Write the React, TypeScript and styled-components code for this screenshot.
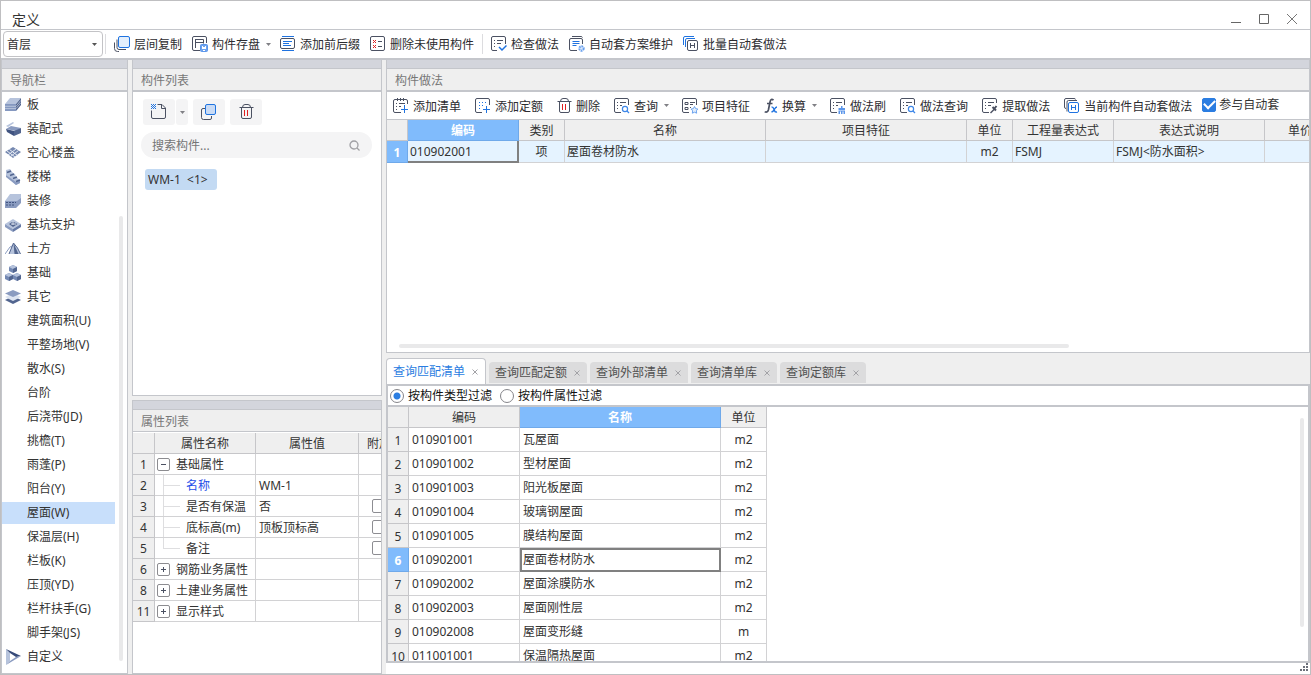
import React, { useState } from 'react';
import styled, { createGlobalStyle, css } from 'styled-components';

const c = {
  frame: '#bfbfc1',
  edge: '#c4c6cb',
  strip: '#d3d5dc',
  head: '#efefef',
  grid: '#d2d2d4',
  ink: '#333',
  line: '#4b5162',
  blue: '#2b7de1',
  sel: '#80bbfc',
};

const Global = createGlobalStyle`
  * { box-sizing: border-box; }
  body { margin: 0; background: #fff; }
  body, button, input, select, table {
    font-family: "Noto Sans", "Noto Sans CJK SC", sans-serif;
    font-size: 12px;
    line-height: 20px;
    color: ${c.ink};
  }
  button { border: 0; padding: 0; background: none; cursor: pointer; white-space: nowrap; }
`;

/* ---------- frame ---------- */

const Window = styled.div`
  display: flex;
  flex-direction: column;
  height: 100vh;
  border: 1px solid ${c.frame};
  background: #fff;
  overflow: hidden;
`;

const TitleBar = styled.header`
  display: flex;
  align-items: flex-end;
  justify-content: space-between;
  flex: none;
  height: 29px;
  padding: 0 12px 0 11px;
  border-bottom: 1px solid ${c.edge};
`;

const Title = styled.h1`
  margin: 0;
  font-size: 14px;
  font-weight: 400;
  line-height: 18px;
`;

const WindowButtons = styled.div`
  display: flex;
  gap: 16px;
  padding-bottom: 3px;
  button { display: flex; }
`;

const Body = styled.main`
  display: grid;
  grid-template-columns: 127px 250px minmax(0, 1fr);
  column-gap: 4px;
  flex: 1;
  min-height: 0;
  background: ${c.head};
`;

const Column = styled.div<{ $rows: string; $gap?: number }>`
  display: grid;
  grid-template-rows: ${p => p.$rows};
  grid-template-columns: minmax(0, 1fr);
  row-gap: ${p => p.$gap ?? 0}px;
  min-height: 0;
`;

const Panel = styled.section`
  display: flex;
  flex-direction: column;
  min-width: 0;
  min-height: 0;
  border: 1px solid ${c.edge};
  border-top: 0;
  background: #fff;
  overflow: hidden;
  position: relative;
`;

const Strip = styled.div<{ $top?: boolean }>`
  flex: none;
  height: ${p => (p.$top ? 10 : 9)}px;
  background: ${c.strip};
  border-top: ${p => (p.$top ? `1px solid ${c.edge}` : '0')};
  border-bottom: 1px solid ${c.edge};
`;

const PanelTitle = styled.h2<{ $line?: number }>`
  flex: none;
  margin: 0;
  padding: 1px 8px 0;
  height: ${p => 21 + (p.$line ?? 2)}px;
  border-bottom: ${p => p.$line ?? 2}px solid ${c.edge};
  background: ${c.head};
  color: #777;
  font-size: 12px;
  font-weight: 400;
  line-height: 21px;
`;

const ScrollThumb = styled.div<{ $vertical?: boolean; $from: string; $to: string; $edge: number }>`
  position: absolute;
  border-radius: 2px;
  background: #e9e9ea;
  ${p =>
    p.$vertical
      ? css`width: 4px; right: ${p.$edge}px; top: ${p.$from}; bottom: ${p.$to};`
      : css`height: 4px; bottom: ${p.$edge}px; left: ${p.$from}; right: ${p.$to};`}
`;

/* ---------- toolbars ---------- */

const MainToolbar = styled.div`
  display: flex;
  align-items: center;
  gap: 10px;
  flex: none;
  height: 30px;
  padding: 0 2px;
  border-bottom: 2px solid ${c.edge};
`;

const FloorPicker = styled.label`
  display: flex;
  align-items: center;
  width: 100px;
  height: 26px;
  padding: 0 5px 0 3px;
  border: 1px solid #c3c3c6;
  border-radius: 4px;
  select {
    flex: 1;
    appearance: none;
    border: 0;
    padding: 1px 0 0;
    background: none;
    outline: none;
  }
`;

const Divider = styled.span<{ $tight?: boolean }>`
  width: 1px;
  height: 20px;
  margin: 0 -2px 0 ${p => (p.$tight ? -8 : -2)}px;
  background: #dcdcdf;
`;

const PickerGroup = styled.div`
  display: flex;
  align-items: center;
  gap: 10px;
`;

const ToolButton = styled.button`
  display: flex;
  align-items: center;
  gap: 4px;
  color: #2c2c30;
  svg { flex: none; }
`;

const LowText = styled.span`
  padding-top: 2px;
`;

const ToolGroup = styled.div`
  display: flex;
  align-items: center;
  gap: 6px;
  margin-right: -1px;
`;

const CaretButton = styled.button`
  display: flex;
  align-items: center;
  height: 16px;
`;

const PracticeToolbar = styled.div`
  display: flex;
  align-items: center;
  gap: 14px;
  flex: none;
  height: 28px;
  padding: 0 6px;
  border-bottom: 1px solid ${c.edge};
`;

const AutoCheck = styled.label`
  display: flex;
  align-items: center;
  gap: 3px;
  margin-left: -4px;
  padding-bottom: 2px;
  white-space: nowrap;
`;

const TickBox = styled.input.attrs({ type: 'checkbox' })`
  appearance: none;
  flex: none;
  width: 14px;
  height: 14px;
  margin: 0;
  border: 1px solid #8d8d92;
  border-radius: 2px;
  background: #fff;
  &:checked {
    display: flex;
    align-items: center;
    justify-content: center;
    border-color: ${c.blue};
    background: ${c.blue};
  }
  &:checked::after {
    content: '';
    width: 9px;
    height: 5px;
    border: solid #fff;
    border-width: 0 0 2px 2px;
    transform: rotate(-45deg) translate(1px, -1px);
  }
`;

/* ---------- navigation ---------- */

const NavList = styled.ul`
  margin: 0;
  padding: 1px 0 0;
  list-style: none;
  flex: 1;
  overflow: hidden;
`;

const NavRow = styled.li`
  padding: 1px 12px 1px 0;
  height: 24px;
`;

const NavButton = styled.button<{ $active?: boolean; $child?: boolean }>`
  display: flex;
  align-items: center;
  gap: 6px;
  width: 100%;
  height: 22px;
  padding-left: ${p => (p.$child ? 25 : 3)}px;
  background: ${p => (p.$active ? '#c8dffb' : 'none')};
`;

/* ---------- component list ---------- */

const ListActions = styled.div`
  display: flex;
  gap: 5px;
  padding: 7px 10px;
  flex: none;
`;

const SplitButton = styled.div`
  display: flex;
  gap: 1px;
`;

const SoftButton = styled.button<{ $narrow?: boolean }>`
  display: flex;
  align-items: center;
  justify-content: center;
  width: ${p => (p.$narrow ? 12 : 32)}px;
  height: 26px;
  border-radius: 3px;
  background: #f4f4f5;
`;

const SearchField = styled.label`
  display: flex;
  align-items: center;
  flex: none;
  height: 26px;
  margin: 0 9px 0 8px;
  padding: 0 12px 0 11px;
  border-radius: 13px;
  background: #f4f4f5;
  input {
    flex: 1;
    min-width: 0;
    border: 0;
    padding: 2px 0 0;
    background: none;
    outline: none;
    &::placeholder { color: #757575; opacity: 1; }
  }
`;

const ComponentItem = styled.button`
  align-self: flex-start;
  min-width: 72px;
  height: 21px;
  margin: 11px 12px;
  padding: 0 3px;
  border-radius: 3px;
  background: #c3daf3;
  text-align: left;
  white-space: pre;
`;

/* ---------- tables ---------- */

const Grid = styled.table`
  table-layout: fixed;
  border-collapse: separate;
  border-spacing: 0;
  width: 0;
  flex: none;
  line-height: 18px;
`;

const cell = css`
  padding: 0;
  border: solid ${c.grid};
  border-width: 0 1px 1px 0;
  font-weight: 400;
  white-space: nowrap;
  overflow: hidden;
`;

const headLook = css<{ $selected?: boolean }>`
  ${cell}
  padding-top: 2px;
  border-color: ${p => (p.$selected ? '#6fa9ea' : '#c6c6c9')};
  background: ${p => (p.$selected ? c.sel : c.head)};
  color: ${p => (p.$selected ? '#fff' : c.ink)};
  font-weight: ${p => (p.$selected ? 700 : 400)};
`;

const HeadCell = styled.th<{ $selected?: boolean }>`
  ${headLook}
  height: 21px;
`;

const RowHead = styled.th<{ $selected?: boolean }>`
  ${headLook}
`;

const Cell = styled.td<{ $h: number; $center?: boolean; $focus?: 'box' | 'corner'; $tint?: boolean; $low?: boolean }>`
  ${cell}
  height: ${p => p.$h}px;
  padding-top: ${p => (p.$low ? 2 : 0)}px;
  padding-left: ${p => (p.$center ? 0 : p.$tint ? 2 : 3)}px;
  text-align: ${p => (p.$center ? 'center' : 'left')};
  background: ${p => (p.$tint ? '#e5f3ff' : '#fff')};
  ${p => p.$focus === 'box' && css`outline: 2px solid #808080; outline-offset: -2px;`}
  ${p => p.$focus === 'corner' && css`border-color: #808080; box-shadow: inset -1px -1px #808080;`}
  ${TickBox} { display: block; margin: 0 auto; }
`;

const TableArea = styled.div<{ $inset?: boolean }>`
  flex: 1;
  min-height: 0;
  padding-top: ${p => (p.$inset ? 1 : 0)}px;
  overflow: hidden;
`;

const NameCell = styled.div<{ $link?: boolean }>`
  display: flex;
  align-items: center;
  height: 20px;
  margin-left: -3px;
  color: ${p => (p.$link ? '#1f4fe8' : c.ink)};
`;

const Expander = styled.button`
  display: flex;
  align-items: center;
  justify-content: center;
  width: 13px;
  height: 13px;
  margin: 0 6px 0 2px;
  border: 1px solid #8c8c90;
  border-radius: 2px;
`;

/* ---------- lower query area ---------- */

const QueryArea = styled.div`
  display: flex;
  flex-direction: column;
  min-height: 0;
  padding-top: 5px;
`;

const Tabs = styled.div`
  display: flex;
  align-items: flex-end;
  gap: 3px;
  flex: none;
  height: 26px;
`;

const Tab = styled.div<{ $active?: boolean }>`
  display: flex;
  align-items: center;
  gap: 7px;
  height: ${p => (p.$active ? 26 : 21)}px;
  margin-bottom: ${p => (p.$active ? 0 : 1)}px;
  padding: 0 7px 0 6px;
  border: solid ${c.edge};
  border-width: ${p => (p.$active ? '1px 1px 0' : '0')};
  border-radius: 4px 4px 0 0;
  background: ${p => (p.$active ? '#fff' : '#dcdcdd')};
  button { display: flex; align-items: center; color: ${p => (p.$active ? c.blue : '#505050')}; }
`;

const QueryPanel = styled.section`
  position: relative;
  display: flex;
  flex-direction: column;
  flex: 1;
  min-height: 0;
  border: 2px solid ${c.edge};
  background: #fff;
  overflow: hidden;
`;

const FilterBar = styled.div`
  display: flex;
  align-items: center;
  gap: 8px;
  flex: none;
  height: 21px;
  padding-left: 2px;
  border-bottom: 2px solid ${c.edge};
  label { display: flex; align-items: center; gap: 4px; color: #111; }
`;

const Radio = styled.input.attrs({ type: 'radio' })`
  appearance: none;
  width: 14px;
  height: 14px;
  margin: 0;
  border: 1px solid #85858a;
  border-radius: 50%;
  background: #fff;
  &:checked { background: radial-gradient(circle, ${c.blue} 3px, #fff 4px); }
`;

const StatusBar = styled.footer`
  display: flex;
  justify-content: flex-end;
  align-items: flex-start;
  height: 11px;
  padding-right: 2px;
  background: #fff;
`;

/* ---------- icons ---------- */

const Svg = ({ w = 16, h = 16, children }: { w?: number; h?: number; children: React.ReactNode }) => (
  <svg width={w} height={h} viewBox={`0 0 ${w} ${h}`} fill="none" stroke={c.line} strokeWidth="1" aria-hidden="true">
    {children}
  </svg>
);

const Caret = ({ color = '#808085' }: { color?: string }) => (
  <svg width="5" height="3" viewBox="0 0 5 3" aria-hidden="true"><path d="M0 0h5L2.5 3z" fill={color} /></svg>
);

const sheet = 'M7 14.5H2Q.5 14.5.5 13V2Q.5.5 2 .5h11q1.500 0 1.500 1.500v5M3 4.500h1M6 4.500h6M3 7.500h1M6 7.500h2M3 10.500h1';

const icons: Record<string, React.ReactNode> = {
  floorCopy: (
    <Svg>
      <path d="M3 3.500v8q0 2 2 2h7M.5 6.500v6q0 3 3 3H5" />
      <rect x="4.500" y=".5" width="11" height="11" rx="1.500" fill="#e4effc" stroke="#1f73e0" />
    </Svg>
  ),
  store: (
    <Svg>
      <path d="M8 14.500H2Q.5 14.500.5 13V2Q.5.5 2 .5h11q1.500 0 1.500 1.500v5M3.500 3v9M3.500 3.500h8v4M3.500 6.500h8" />
      <rect x="8.500" y="8.500" width="7" height="7" rx="1" fill="#6ea3ee" stroke="#5c96ea" />
      <path d="M10 10h1v1h2v-1h1v3h-4zM11 14h2v1h-2z" fill="#fff" stroke="none" />
    </Svg>
  ),
  affix: (
    <Svg>
      <path d="M2 .5h12M2 14.500h12M3 5.500h9M3 7.500h6M3 9.500h8" stroke="#1f73e0" />
      <rect x=".5" y="2.500" width="14" height="10" rx="1.500" />
    </Svg>
  ),
  purge: (
    <Svg>
      <rect x=".5" y=".5" width="14" height="14" rx="1.500" />
      <path d="M3 4h1v1h1v-1h1v1h-1v1h1v1h-1v-1h-1v1h-1v-1h1v-1h-1zM3 9h1v1h1v-1h1v1h-1v1h1v1h-1v-1h-1v1h-1v-1h1v-1h-1z" fill="#e02020" stroke="none" />
      <path d="M8 5.500h4M8 10.500h4" />
    </Svg>
  ),
  check: (
    <Svg>
      <path d="M6 14.500H2Q.5 14.500.5 13V2Q.5.5 2 .5h11q1.500 0 1.500 1.500v6M3 4.500h1M6 4.500h6M3 7.500h1M6 7.500h4M3 10.500h1" />
      <path d="m8 11 3 3 4.500-4.500" stroke="#1f73e0" strokeWidth="1.500" />
    </Svg>
  ),
  scheme: (
    <Svg>
      <path d="M3 .5h9q1 0 1.500 1M8 14.500H2Q.5 14.500.5 13V4Q.5 2.500 2 2.500h10q1.500 0 1.500 1.500v4" />
      <path d="M3.500 5.500h7M3.500 7.500h7M3.500 9.500h4" stroke="#1f73e0" />
      <circle cx="12.500" cy="12.500" r="2.200" fill="#dce9fc" stroke="#6ba2ee" strokeWidth="2" strokeDasharray="1.600 .7" />
    </Svg>
  ),
  batch: (
    <Svg>
      <path d="M.5 9V2Q.5.5 2 .5h9M2.500 11V4Q2.500 2.500 4 2.500h8" stroke="#1f73e0" />
      <rect x="4.500" y="4.500" width="10" height="10" rx="1.500" />
      <path d="M7.500 7v5M11.500 7v5M7.500 9.500h4" />
    </Svg>
  ),
  addList: (
    <Svg>
      <path d="M4.500 0v3M7.500 0v3M10.500 0v3M8 14.500H2Q.5 14.500.5 13V3Q.5 1.500 2 1.500h11q1.500 0 1.500 1.500v3M3 5.500h1M6 5.500h6M3 8.500h1M6 8.500h2M3 11.500h1" />
      <path d="M11.500 7v8M8 11.500h7" stroke="#1f73e0" />
    </Svg>
  ),
  addQuota: (
    <Svg>
      <path d="M7 14.500H2Q.5 14.500.5 13V2Q.5.5 2 .5h11q1.500 0 1.500 1.500v5" />
      <path d="M4 4.500h8M4 7.500h6M4 10.500h3" strokeDasharray="1 2" stroke="#1f73e0" />
      <path d="M11.500 8v7M8 11.500h7" stroke="#1f73e0" />
    </Svg>
  ),
  trash: (
    <Svg w={15}>
      <path d="M.5 3.500h14M3.500 3.500q0-3 2.500-3h3q2.500 0 2.500 3M2.500 3.500V13q0 1.500 1.500 1.500h7q1.500 0 1.500-1.500V3.500" />
      <path d="M5.500 6v6M8.500 6v6" stroke="#e02020" />
    </Svg>
  ),
  query: (
    <Svg>
      <path d={sheet} />
      <circle cx="11" cy="11" r="2.600" stroke="#3e87e8" strokeWidth="1.200" /><path d="m13 13 2 2" stroke="#3e87e8" strokeWidth="1.200" />
    </Svg>
  ),
  feature: (
    <Svg>
      <path d="M7 14.500H2Q.5 14.500.5 13V2Q.5.5 2 .5h11q1.500 0 1.500 1.500v5M3 4.500h3v2H3zM3 9.500h3v2H3zM8 4.500h5M8 6.500h3M8 9.500h1" />
      <path d="m12.500 8.500 1.200 2.200 2.300.4-1.700 1.700.4 2.400-2.200-1-2.200 1 .4-2.400L9 11.100l2.300-.4z" stroke="#6ba2ee" fill="#e4effc" />
    </Svg>
  ),
  formula: (
    <Svg w={14}>
      <path d="M9.500 2.200Q7 0 6 4L4.500 11.500q-.8 3.500-3.800 2.300M3 5.500h5.500" strokeWidth="1.700" />
      <path d="M7.500 9.200q1.500-.5 2.200 1.500l1 2.300q.5 1.500 2.300.8M13 9q-1.500 0-2.500 2.200t-3 2.800" stroke="#1f73e0" strokeWidth="1.400" />
    </Svg>
  ),
  brush: (
    <Svg>
      <path d={sheet} />
      <path d="M11 8h1.500v2H15v2H8.500v-2H11zM8.500 12.500h6.500V16H8.500z" fill="#5c96ea" stroke="none" />
      <path d="M10.500 13.500V16M13 13.500V16" stroke="#fff" />
    </Svg>
  ),
  extract: (
    <Svg>
      <path d="M7 14.500H2Q.5 14.500.5 13V2Q.5.5 2 .5h11q1.500 0 1.500 1.500v3M3 4.500h1M6 4.500h6M3 7.500h1M6 7.500h3M3 10.500h1" />
      <path d="m8.500 15 4-4" strokeWidth="1.500" /><path d="m10.500 9 3.500 3.500M12.500 10.500 14.500 8" strokeWidth="2" />
    </Svg>
  ),
  current: (
    <Svg>
      <path d="M2 10.500Q.5 10.500.5 9V2Q.5.5 2 .5h8q1.500 0 1.500 1M3 13.500V4Q3 2.500 4.500 2.500H13" />
      <rect x="4.500" y="4.500" width="10" height="10" rx="1.500" stroke="#1f73e0" fill="#fff" />
      <path d="M7.500 7v5M11.500 7v5M7.500 9.500h4" stroke="#1f73e0" />
    </Svg>
  ),
  create: (
    <Svg>
      <path d="M6.500.5h4.500L14.500 4V13q0 1.500-1.500 1.500H2Q.5 14.500.5 13V6.500M10.500.5V4.500h4" />
      <path d="M0 .5h5M0 2.500h5M0 4.500h5M1 1.500h4M1 3.500h4" stroke="#1f73e0" strokeDasharray="1 1" />
    </Svg>
  ),
  duplicate: (
    <Svg>
      <path d="M4 4.500H2Q.5 4.500.5 6v7.500q0 2 2 2H9q1.500 0 1.500-1.500V12" />
      <rect x="4.500" y=".5" width="10" height="10" rx="1.500" fill="#c9dbf5" stroke="#1f73e0" />
    </Svg>
  ),
  search: <Svg w={11} h={11}><circle cx="5" cy="5" r="4" stroke="#a0a0a4" strokeWidth="1.300" /><path d="m8 8 2.500 2.500" stroke="#a0a0a4" strokeWidth="1.300" /></Svg>,
  close: <Svg w={6} h={6}><path d="m.5.5 5 5m0-5-5 5" stroke="#a2a2a6" /></Svg>,
};

const N = ({ children }: { children: React.ReactNode }) => (
  <svg width="16" height="16" viewBox="0 0 16 16" aria-hidden="true">{children}</svg>
);
const light = '#b6c3dc', mid = '#8a9bc0', dark = '#52658f';

const navIcons: Record<string, React.ReactNode> = {
  slab: <N><path d="M5 1h11l-5 6H0z" fill={light} /><path d="M0 7h11v7H0z" fill="#8598c0" /><path d="M11 7l5-6v7l-5 6z" fill={dark} /><path d="M0 9.300h11l5-6M0 11.600h11l5-6" stroke="#dbe2ef" strokeWidth=".6" fill="none" /></N>,
  prefab: <N><path d="M1 5l7-4 1 1-6 4z" fill={light} /><path d="M1 8l5-3 10 2-5 3z" fill={mid} /><path d="M1 8l8 2v5l-7-4z" fill="#405380" /><path d="M9 10l7-3v5l-7 3z" fill={dark} /></N>,
  hollow: <N><path d="M8 2l8 5-8 6-8-6z" fill="#7588b0" /><path d="M2 6l8 6M4.500 4.500l8 6M11 4l-8 6M13.500 5.500l-8 6" stroke="#e6ebf4" strokeWidth="1" /></N>,
  stair: <N><path d="M1 1l4-1 3 4 2 1 1 3 4 3v3l-4 2L1 6z" fill={light} /><path d="M1 6l10 7 4-2v3l-4 2L1 8z" fill={mid} /><path d="M2 3.500l4-1.500M5 6.500l4-1.500M8 9.500l4-1.500M11 12.500l4-1.500" stroke={dark} strokeWidth="1.600" /></N>,
  finish: <N><path d="M5 1h11v7H0z" fill={light} /><path d="M0 8h12l4-3v5l-5 5H0z" fill={mid} /><path d="M1 9.500h10M1 12h9" stroke="#405480" strokeDasharray="2 1" /></N>,
  pit: <N><path d="M0 7l8-5 8 5-8 5z" fill={light} /><path d="M0 7l8 5v3L0 10z" fill={mid} /><path d="M16 7l-8 5v3l8-5z" fill="#6579a5" /><path d="M4 7l4-2.500L12.500 7 8 10z" fill={dark} /><path d="M8 4v4M6 7h5" stroke="#d9e1ee" /></N>,
  earth: <N><path d="M0 13L5 6l2-1" stroke={mid} fill="none" /><path d="M4 13L8.500 2l4 5 3 6z" fill={light} /><path d="M8.500 2l1 11h4z" fill={dark} /><path d="M4 13L8.500 2l4 5 3 6" stroke={dark} fill="none" /></N>,
  base: <N><path d="M8 0l4 2v4L8 8 4 6V2zM4 8l4 2v4l-4 2-4-2v-4zM12 8l4 2v4l-4 2-4-2v-4z" fill="#7388b3" /><path d="M8 0l4 2-4 2-4-2zM4 8l4 2-4 2-4-2zM12 8l4 2-4 2-4-2z" fill={light} /><path d="M8 4l4-2v4L8 8zM4 12l4-2v4l-4 2zM12 12l4-2v4l-4 2z" fill={dark} /></N>,
  other: <N><path d="M0 11l8-4 8 4-8 4z" fill={dark} /><path d="M0 8l8-4 8 4-8 4z" fill="#dde4f1" /><path d="M0 4.500L8 1l8 3.500L8 8z" fill={mid} /></N>,
  custom: <N><path d="M1 0v16l4-4V4z" fill={light} /><path d="M1 0l15 7-5 1-6-4z" fill="#364a79" /><path d="M1 16l15-9-5 1-6 4z" fill={mid} /></N>,
};

/* ---------- data ---------- */

const navGroups: [string, string][] = [
  ['slab', '板'], ['prefab', '装配式'], ['hollow', '空心楼盖'], ['stair', '楼梯'], ['finish', '装修'],
  ['pit', '基坑支护'], ['earth', '土方'], ['base', '基础'], ['other', '其它'],
];
const navChildren = [
  '建筑面积(U)', '平整场地(V)', '散水(S)', '台阶', '后浇带(JD)', '挑檐(T)', '雨蓬(P)', '阳台(Y)',
  '屋面(W)', '保温层(H)', '栏板(K)', '压顶(YD)', '栏杆扶手(G)', '脚手架(JS)',
];

type Property = { no: number; name: string; value?: string; kind: 'open' | 'closed' | 'leaf'; last?: boolean; extra?: boolean };

const properties: Property[] = [
  { no: 1, name: '基础属性', kind: 'open' },
  { no: 2, name: '名称', value: 'WM-1', kind: 'leaf' },
  { no: 3, name: '是否有保温', value: '否', kind: 'leaf', extra: true },
  { no: 4, name: '底标高(m)', value: '顶板顶标高', kind: 'leaf', extra: true },
  { no: 5, name: '备注', kind: 'leaf', last: true, extra: true },
  { no: 6, name: '钢筋业务属性', kind: 'closed' },
  { no: 8, name: '土建业务属性', kind: 'closed' },
  { no: 11, name: '显示样式', kind: 'closed' },
];

const practiceColumns: [string, number][] = [
  ['编码', 111], ['类别', 46], ['名称', 201], ['项目特征', 201], ['单位', 46], ['工程量表达式', 101], ['表达式说明', 151], ['单价', 71],
];

const matches: [string, string, string][] = [
  ['010901001', '瓦屋面', 'm2'], ['010901002', '型材屋面', 'm2'], ['010901003', '阳光板屋面', 'm2'],
  ['010901004', '玻璃钢屋面', 'm2'], ['010901005', '膜结构屋面', 'm2'], ['010902001', '屋面卷材防水', 'm2'],
  ['010902002', '屋面涂膜防水', 'm2'], ['010902003', '屋面刚性层', 'm2'], ['010902008', '屋面变形缝', 'm'],
  ['011001001', '保温隔热屋面', 'm2'],
];

const tabs = ['查询匹配清单', '查询匹配定额', '查询外部清单', '查询清单库', '查询定额库'];

/* ---------- parts ---------- */

const Tool = ({ icon, label, menu }: { icon: string; label: string; menu?: boolean }) => {
  const button = <ToolButton>{icons[icon]}<LowText>{label}</LowText></ToolButton>;
  if (!menu) return button;
  return (
    <ToolGroup>
      {button}
      <CaretButton aria-label={`${label}选项`}><Caret /></CaretButton>
    </ToolGroup>
  );
};

const Branch = ({ last }: { last?: boolean }) => (
  <svg width="31" height="20" viewBox="0 0 31 20" overflow="visible" aria-hidden="true">
    <path d={`M8.500 -4V${last ? 11 : 21}M8.500 10.500H25`} stroke="#dedee0" fill="none" />
  </svg>
);

const NavItem = ({ name, icon, active, onPick }: { name: string; icon?: React.ReactNode; active: boolean; onPick: (n: string) => void }) => (
  <NavRow>
    <NavButton $child={!icon} $active={active} onClick={() => onPick(name)}>{icon}{name}</NavButton>
  </NavRow>
);

const PropertyRow = ({ p }: { p: Property }) => (
  <tr>
    <RowHead>{p.no}</RowHead>
    <Cell $h={21}>
      <NameCell $link={p.name === '名称'}>
        {p.kind === 'leaf' ? (
          <Branch last={p.last} />
        ) : (
          <Expander aria-label={p.kind === 'open' ? '收起' : '展开'}>
            <Svg w={7} h={7}><path d={p.kind === 'open' ? 'M1 3.500h5' : 'M1 3.500h5M3.500 1v5'} /></Svg>
          </Expander>
        )}
        <LowText>{p.name}</LowText>
      </NameCell>
    </Cell>
    <Cell $h={21} $low>{p.value}</Cell>
    <Cell $h={21} $center>{p.extra && <TickBox aria-label={`${p.name}附加`} />}</Cell>
  </tr>
);

function QueryBlock() {
  const [filter, setFilter] = useState('type');
  const [tab, setTab] = useState(tabs[0]);
  return (
    <QueryArea>
      <Tabs>
        {tabs.map(t => (
          <Tab key={t} $active={t === tab}>
            <button onClick={() => setTab(t)}>{t}</button>
            <button aria-label={`关闭${t}`}>{icons.close}</button>
          </Tab>
        ))}
      </Tabs>
      <QueryPanel>
        <FilterBar>
          <label><Radio name="filter" checked={filter === 'type'} onChange={() => setFilter('type')} />按构件类型过滤</label>
          <label><Radio name="filter" checked={filter === 'prop'} onChange={() => setFilter('prop')} />按构件属性过滤</label>
        </FilterBar>
        <TableArea>
          <Grid>
            <colgroup><col width="21" /><col width="111" /><col width="201" /><col width="46" /></colgroup>
            <thead>
              <tr><HeadCell /><HeadCell>编码</HeadCell><HeadCell $selected>名称</HeadCell><HeadCell>单位</HeadCell></tr>
            </thead>
            <tbody>
              {matches.map(([code, name, unit], i) => (
                <tr key={code}>
                  <RowHead $selected={i === 5}>{i + 1}</RowHead>
                  <Cell $h={24}>{code}</Cell>
                  <Cell $h={24} $focus={i === 5 ? 'box' : undefined}>{name}</Cell>
                  <Cell $h={24} $center>{unit}</Cell>
                </tr>
              ))}
            </tbody>
          </Grid>
        </TableArea>
        <ScrollThumb $vertical $from="32px" $to="34px" $edge={4} />
      </QueryPanel>
    </QueryArea>
  );
}

export default function App() {
  const [nav, setNav] = useState('屋面(W)');
  const [auto, setAuto] = useState(true);

  return (
    <>
      <Global />
      <Window>
        <TitleBar>
          <Title>定义</Title>
          <WindowButtons>
            <button aria-label="最小化"><Svg w={12} h={12}><path d="M1 8.500h10" stroke="#666" /></Svg></button>
            <button aria-label="最大化"><Svg w={12} h={12}><path d="M1.500.5h9v9h-9z" stroke="#666" /></Svg></button>
            <button aria-label="关闭"><Svg w={12} h={12}><path d="m1 0 10 10M11 0 1 10" stroke="#777" /></Svg></button>
          </WindowButtons>
        </TitleBar>

        <MainToolbar>
          <PickerGroup>
            <FloorPicker>
              <select aria-label="楼层" defaultValue="首层"><option>首层</option></select>
              <Caret color="#555" />
            </FloorPicker>
            <Divider $tight />
          </PickerGroup>
          <Tool icon="floorCopy" label="层间复制" />
          <Tool icon="store" label="构件存盘" menu />
          <Tool icon="affix" label="添加前后缀" />
          <Tool icon="purge" label="删除未使用构件" />
          <Divider />
          <Tool icon="check" label="检查做法" />
          <Tool icon="scheme" label="自动套方案维护" />
          <Tool icon="batch" label="批量自动套做法" />
        </MainToolbar>

        <Body>
          <Panel as="nav">
            <Strip />
            <PanelTitle>导航栏</PanelTitle>
            <NavList>
              {navGroups.map(([icon, name]) => (
                <NavItem key={name} name={name} icon={navIcons[icon]} active={nav === name} onPick={setNav} />
              ))}
              {navChildren.map(name => (
                <NavItem key={name} name={name} active={nav === name} onPick={setNav} />
              ))}
              <NavItem name="自定义" icon={navIcons.custom} active={nav === '自定义'} onPick={setNav} />
            </NavList>
            <ScrollThumb $vertical $from="156px" $to="12px" $edge={4} />
          </Panel>

          <Column $rows="minmax(0, 336fr) minmax(0, 274fr)" $gap={4}>
            <Panel>
              <Strip />
              <PanelTitle>构件列表</PanelTitle>
              <ListActions>
                <SplitButton>
                  <SoftButton aria-label="新建">{icons.create}</SoftButton>
                  <SoftButton $narrow aria-label="新建选项"><Caret /></SoftButton>
                </SplitButton>
                <SoftButton aria-label="复制">{icons.duplicate}</SoftButton>
                <SoftButton aria-label="删除">{icons.trash}</SoftButton>
              </ListActions>
              <SearchField>
                <input type="text" placeholder="搜索构件..." aria-label="搜索构件" />
                {icons.search}
              </SearchField>
              <ComponentItem>{'WM-1  <1>'}</ComponentItem>
            </Panel>

            <Panel>
              <Strip $top />
              <PanelTitle $line={1}>属性列表</PanelTitle>
              <TableArea $inset>
                <Grid>
                  <colgroup><col width="22" /><col width="101" /><col width="103" /><col width="41" /></colgroup>
                  <thead>
                    <tr><HeadCell /><HeadCell>属性名称</HeadCell><HeadCell>属性值</HeadCell><HeadCell>附加</HeadCell></tr>
                  </thead>
                  <tbody>
                    {properties.map(p => <PropertyRow key={p.no} p={p} />)}
                  </tbody>
                </Grid>
              </TableArea>
            </Panel>
          </Column>

          <Column $rows="minmax(0, 293fr) minmax(0, 310fr) 11px">
            <Panel>
              <Strip />
              <PanelTitle>构件做法</PanelTitle>
              <PracticeToolbar>
                <Tool icon="addList" label="添加清单" />
                <Tool icon="addQuota" label="添加定额" />
                <Tool icon="trash" label="删除" />
                <Tool icon="query" label="查询" menu />
                <Tool icon="feature" label="项目特征" />
                <Tool icon="formula" label="换算" menu />
                <Tool icon="brush" label="做法刷" />
                <Tool icon="query" label="做法查询" />
                <Tool icon="extract" label="提取做法" />
                <Tool icon="current" label="当前构件自动套做法" />
                <AutoCheck><TickBox checked={auto} onChange={e => setAuto(e.target.checked)} />参与自动套</AutoCheck>
              </PracticeToolbar>
              <TableArea>
                <Grid>
                  <colgroup><col width="21" />{practiceColumns.map(([n, w]) => <col key={n} width={w} />)}</colgroup>
                  <thead>
                    <tr><HeadCell />{practiceColumns.map(([n], i) => <HeadCell key={n} $selected={i === 0}>{n}</HeadCell>)}</tr>
                  </thead>
                  <tbody>
                    <tr>
                      <RowHead $selected>1</RowHead>
                      <Cell $h={22} $tint $focus="corner">010902001</Cell>
                      <Cell $h={22} $tint $center>项</Cell>
                      <Cell $h={22} $tint>屋面卷材防水</Cell>
                      <Cell $h={22} $tint />
                      <Cell $h={22} $tint $center>m2</Cell>
                      <Cell $h={22} $tint>FSMJ</Cell>
                      <Cell $h={22} $tint>FSMJ&lt;防水面积&gt;</Cell>
                      <Cell $h={22} $tint />
                    </tr>
                  </tbody>
                </Grid>
              </TableArea>
              <ScrollThumb $from="12px" $to="26%" $edge={4} />
            </Panel>

            <QueryBlock />

            <StatusBar>
              <svg width="8" height="8" viewBox="0 0 8 8" aria-hidden="true">
                <path d="M6 0h2v2H6zM3 3h2v2H3zM6 3h2v2H6zM0 6h2v2H0zM3 6h2v2H3zM6 6h2v2H6z" fill="#6c707a" />
              </svg>
            </StatusBar>
          </Column>
        </Body>
      </Window>
    </>
  );
}
